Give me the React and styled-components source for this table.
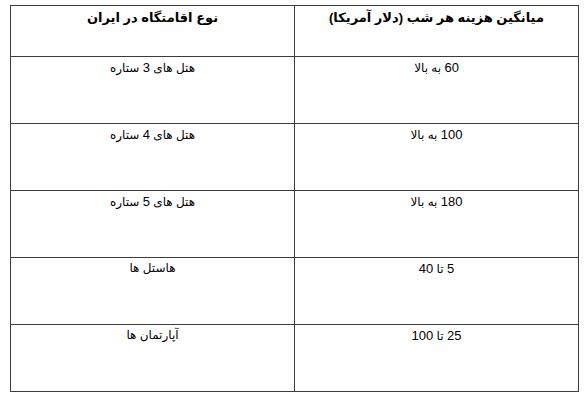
import styled, { createGlobalStyle } from "styled-components";

const GlobalStyle = createGlobalStyle`
  html, body {
    margin: 0;
    padding: 0;
    background: #ffffff;
  }
  body {
    font-family: "Liberation Sans", "DejaVu Sans", Arial, sans-serif;
    color: #000;
  }
`;

const Page = styled.div`
  padding: 5px 10px 0 10px;
`;

const Table = styled.table`
  direction: rtl;
  width: 569px;
  border-collapse: collapse;
  table-layout: fixed;
`;

const HeadCell = styled.th`
  height: 46px;
  padding: 4px 4px 0;
  border: 1px solid #3c3c3c;
  vertical-align: top;
  text-align: center;
  font-size: 13px;
  line-height: 15px;
  font-weight: bold;
`;

const Cell = styled.td`
  height: 63px;
  padding: 3px 4px 0;
  border: 1px solid #3c3c3c;
  vertical-align: top;
  text-align: center;
  font-size: 12px;
  line-height: 15px;
  font-weight: normal;
`;

const Num = styled.span`
  font-size: 13px;
`;

const rows = [
  ["60 به بالا", "هتل های 3 ستاره"],
  ["100 به بالا", "هتل های 4 ستاره"],
  ["180 به بالا", "هتل های 5 ستاره"],
  ["5 تا 40", "هاستل ها"],
  ["25 تا 100", "آپارتمان ها"],
];

// split digits from words so the numbers get their own size
function Mixed({ text }) {
  return text.split(/(\d+)/).map((part, i) =>
    /^\d+$/.test(part) ? <Num key={i}>{part}</Num> : part
  );
}

export default function App() {
  return (
    <Page>
      <GlobalStyle />
      <Table>
        <thead>
          <tr>
            <HeadCell>میانگین هزینه هر شب (دلار آمریکا)</HeadCell>
            <HeadCell>نوع اقامتگاه در ایران</HeadCell>
          </tr>
        </thead>
        <tbody>
          {rows.map(([price, type]) => (
            <tr key={type}>
              <Cell>
                <Mixed text={price} />
              </Cell>
              <Cell>
                <Mixed text={type} />
              </Cell>
            </tr>
          ))}
        </tbody>
      </Table>
    </Page>
  );
}
